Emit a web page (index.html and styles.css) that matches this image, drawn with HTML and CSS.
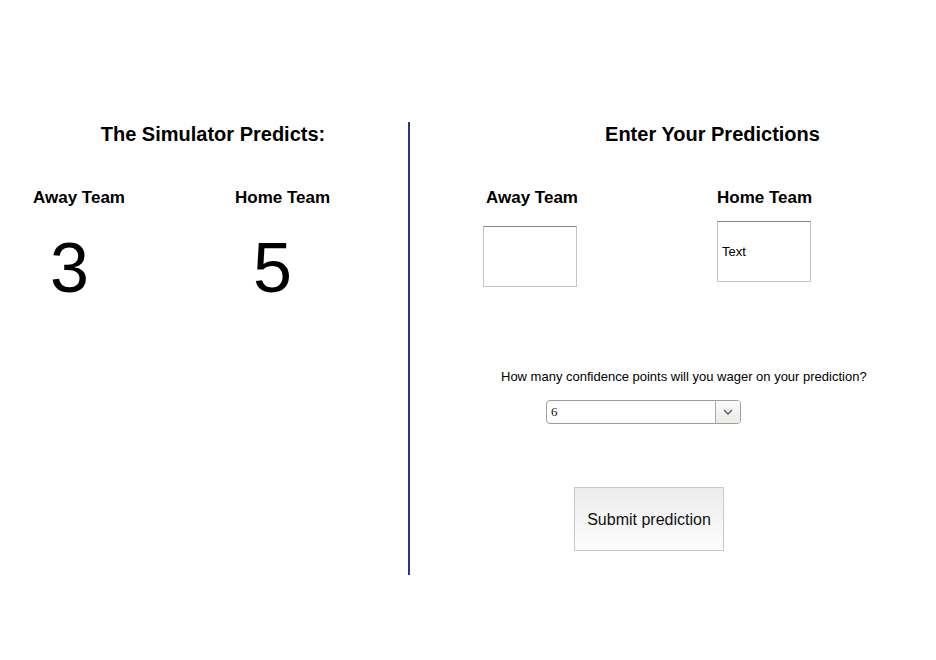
FILE: index.html
```html
<!DOCTYPE html>
<html>
<head>
<meta charset="utf-8">
<title>Predictions</title>
<link rel="stylesheet" href="styles.css">
</head>
<body>
<div class="page">
  <section class="left">
    <h2 class="title left-title">The Simulator Predicts:</h2>
    <div class="teams">
      <div class="team team-away">
        <h3 class="label">Away Team</h3>
        <div class="num">3</div>
      </div>
      <div class="team team-home">
        <h3 class="label">Home Team</h3>
        <div class="num">5</div>
      </div>
    </div>
  </section>
  <section class="right">
    <h2 class="title right-title">Enter Your Predictions</h2>
    <div class="entries">
      <div class="entry entry-away">
        <h3 class="label">Away Team</h3>
        <input class="score score-away" type="text">
      </div>
      <div class="entry entry-home">
        <h3 class="label">Home Team</h3>
        <input class="score score-home" type="text" value="Text">
      </div>
    </div>
    <p class="question">How many confidence points will you wager on your prediction?</p>
    <div class="select">
      <span class="select-value">6</span>
      <span class="select-arrow">
        <svg width="10" height="6" viewBox="0 0 10 6"><polyline points="1,1 5,5 9,1" fill="none" stroke="#555" stroke-width="1.3"/></svg>
      </span>
    </div>
    <button class="submit" type="button">Submit prediction</button>
  </section>
</div>
</body>
</html>
```
FILE: styles.css
```css
html, body {
  margin: 0;
  padding: 0;
  background: #fff;
}
body {
  font-family: "Liberation Sans", Arial, sans-serif;
  color: #000;
}
.page {
  display: flex;
  padding-top: 122px;
}
.left {
  width: 408px;
  height: 453px;
  border-right: 2px solid #22398a;
  flex: none;
}
.right {
  flex: 1;
  display: flex;
  flex-direction: column;
  align-items: flex-start;
}
.title {
  margin: 0;
  padding-top: 1px;
  font-size: 20px;
  line-height: 23px;
  font-weight: bold;
  text-align: center;
  align-self: stretch;
}
.left-title {
  padding-left: 18px;
}
.right-title {
  padding-left: 79px;
}
.label {
  margin: 0;
  font-size: 17px;
  line-height: 20px;
  font-weight: bold;
}
.teams {
  display: flex;
  padding-left: 33px;
  margin-top: 42px;
}
.team-away {
  width: 202px;
}
.num {
  font-size: 70px;
  line-height: 70px;
  margin-top: 24.5px;
  padding-left: 17px;
}
.team-home .num {
  padding-left: 18px;
}
.entries {
  display: flex;
  align-items: flex-start;
  margin-top: 42px;
  margin-left: 73px;
}
.entry-away {
  width: 234px;
}
.entry-away .label {
  padding-left: 3px;
}
.score {
  display: block;
  box-sizing: border-box;
  width: 94px;
  height: 61px;
  margin: 0;
  padding: 0 4px;
  border: 1px solid #c4c4c4;
  border-top-color: #858585;
  font-family: "Liberation Sans", Arial, sans-serif;
  font-size: 13px;
  color: #000;
  background: #fff;
  outline: none;
}
.score-away {
  margin-top: 17.7px;
}
.score-home {
  margin-top: 12.7px;
}
.question {
  margin: 82.6px 0 0 91px;
  font-size: 13px;
  line-height: 15px;
  white-space: nowrap;
}
.select {
  display: flex;
  box-sizing: border-box;
  width: 195px;
  height: 24px;
  margin: 15.4px 0 0 136px;
  border: 1px solid #9d9d9d;
  border-radius: 4px;
  background: #fff;
  overflow: hidden;
}
.select-value {
  flex: 1;
  padding-left: 4px;
  font-family: "Liberation Serif", "Times New Roman", serif;
  font-size: 13px;
  line-height: 21px;
  color: #111;
}
.select-arrow {
  width: 24px;
  display: flex;
  align-items: center;
  justify-content: center;
  border-left: 1px solid #a9a9a9;
  background: linear-gradient(#fbfbfb, #ecebe7);
}
.submit {
  box-sizing: border-box;
  width: 150px;
  height: 64px;
  margin: 63px 0 0 164px;
  padding: 3px 0 0;
  border: 1px solid #c8c8c8;
  border-radius: 0;
  background: linear-gradient(#ececec, #fdfdfd);
  font-family: "Liberation Sans", Arial, sans-serif;
  font-size: 16px;
  color: #111;
}
```
